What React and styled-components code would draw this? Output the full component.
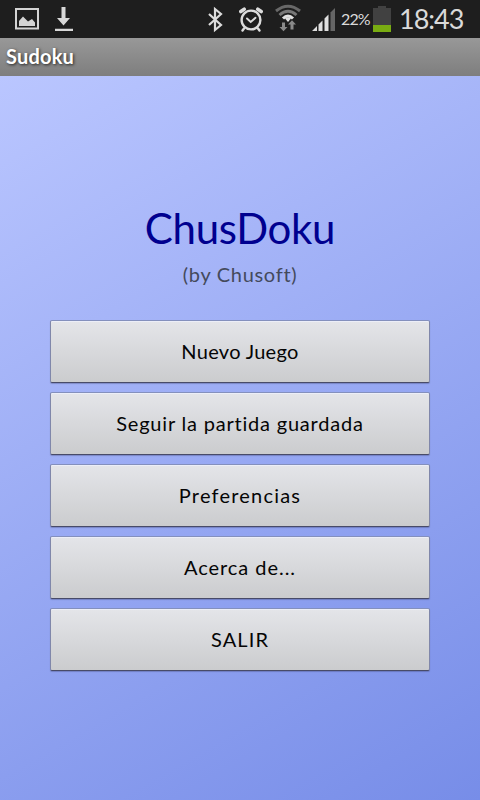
import React from "react";
import styled, { createGlobalStyle } from "styled-components";

const GlobalStyle = createGlobalStyle`
	* {
		box-sizing: border-box;
	}
	body {
		margin: 0;
		font-family: Lato, "Open Sans", sans-serif;
	}
`;

const Screen = styled.div`
	display: flex;
	flex-direction: column;
	width: 480px;
	height: 800px;
	overflow: hidden;
`;

const StatusBar = styled.header`
	display: flex;
	align-items: flex-start;
	justify-content: space-between;
	height: 38px;
	padding: 0 16px 0 15px;
	background: #1e1e1e;
	color: #dadada;
`;

const IconGroup = styled.div`
	display: flex;
	align-items: flex-start;
	gap: ${(props) => props.$gap}px;
`;

const Icon = styled.svg`
	display: block;
	flex: none;
	height: 38px;
`;

const BatteryLevel = styled.span`
	width: 29px;
	margin: 0 3px 0 6px;
	font-size: 16px;
	line-height: 38px;
	letter-spacing: -0.9px;
	white-space: nowrap;
`;

const Clock = styled.span`
	width: 65px;
	margin-left: 8px;
	font-size: 27px;
	line-height: 38px;
	letter-spacing: -1px;
	white-space: nowrap;
`;

const TitleBar = styled.div`
	height: 38px;
	padding-left: 6px;
	background: linear-gradient(#989898, #7e7e7e);
	color: #fff;
	font-size: 20px;
	font-weight: 700;
	line-height: 37px;
	letter-spacing: 0.2px;
	text-shadow: 1px 1px 3px rgba(0, 0, 0, 0.75);
`;

const Content = styled.main`
	display: flex;
	flex: 1;
	flex-direction: column;
	align-items: center;
	padding-top: 126px;
	background: linear-gradient(150deg, #bac6ff 0%, #778de8 100%);
`;

const Title = styled.h1`
	margin: 0;
	color: #00008f;
	font-size: 42px;
	font-weight: 400;
	line-height: 53px;
	letter-spacing: -0.3px;
`;

const Subtitle = styled.p`
	margin: 5px 0 32px;
	color: #444a5c;
	font-size: 20px;
	line-height: 28px;
	letter-spacing: 0.7px;
`;

const Menu = styled.nav`
	display: flex;
	flex-direction: column;
	gap: 9px;
	width: 380px;
`;

const MenuButton = styled.button`
	height: 63px;
	padding: 0 0 1px;
	border: 1px solid #8087aa;
	border-top-color: #8490bd;
	border-bottom: 1px solid #484b68;
	border-radius: 2px;
	background: linear-gradient(#e4e5e9, #cbccce);
	box-shadow: inset 0 1px #eceef8, 0 1px 1px rgba(45, 50, 90, 0.3);
	color: #050505;
	font-family: inherit;
	font-size: 20px;
	letter-spacing: ${(props) => props.$tracking}px;
`;

const menuItems = [
	{ label: "Nuevo Juego", tracking: 0.3 },
	{ label: "Seguir la partida guardada", tracking: 0.8 },
	{ label: "Preferencias", tracking: 1.2 },
	{ label: "Acerca de...", tracking: 0.95 },
	{ label: "SALIR", tracking: 1.1 },
];

function PictureIcon() {
	return (
		<Icon width="24" viewBox="0 0 24 38">
			<rect x="1" y="9" width="22" height="19.5" fill="none" stroke="#d4d4d4" strokeWidth="2" />
			<path d="M4 26V21L8 16.5l5 5 4-2.5 3 3.5V26z" fill="#d4d4d4" />
		</Icon>
	);
}

function DownloadIcon() {
	return (
		<Icon width="18" viewBox="0 0 18 38">
			<path d="M6.5 7h4v11H15l-6.5 7.5L2 18h4.5zM0 28.7h18V31H0z" fill="#d8d8d8" />
		</Icon>
	);
}

function BluetoothIcon() {
	return (
		<Icon width="15" viewBox="0 0 15 38">
			<path
				d="M1 14l12 11-6 5V9l6 5L1 25"
				fill="none"
				stroke="#dcdcdc"
				strokeWidth="2.2"
			/>
		</Icon>
	);
}

function AlarmIcon() {
	return (
		<Icon width="24" viewBox="0 0 24 38">
			<g fill="none" stroke="#dcdcdc" strokeLinecap="round">
				<circle cx="12" cy="20" r="9.4" strokeWidth="2.4" />
				<path d="M8 18.5l3.7 3.5 4.8-4.2" strokeWidth="2" />
				<path d="M1.8 11.5l3.4-2.3M22.2 11.5l-3.4-2.3" strokeWidth="3.6" />
				<path d="M5 28.5l-1.5 2M19 28.5l1.5 2" strokeWidth="2.4" />
			</g>
		</Icon>
	);
}

function WifiIcon() {
	return (
		<Icon width="26" viewBox="0 0 26 38">
			<g fill="none" strokeWidth="3">
				<path d="M1 11Q13 1.5 25 11" stroke="#686868" />
				<path d="M4.5 15Q13 7.5 21.5 15" stroke="#777" />
				<path d="M8 18.5Q13 13.5 18 18.5" stroke="#e0e0e0" />
			</g>
			<path d="M10 18.5Q13 16 16 18.5L13 22z" fill="#e0e0e0" />
			<path d="M7 22.5h3v4.5h2.5l-4 4.2L4.5 27H7zM15.5 29.5v-5H13l4-4.2 4 4.2h-2.5v5z" fill="#8a8a8a" />
		</Icon>
	);
}

function SignalIcon() {
	return (
		<Icon width="23" viewBox="0 0 23 38">
			<path d="M0 31l5-5v5zM6.5 24.5l4-4V31h-4zM12.5 18.5l4-4V31h-4z" fill="#dedede" />
			<path d="M18.5 12.5L23 8v23h-4.5z" fill="#666" />
		</Icon>
	);
}

function BatteryIcon() {
	return (
		<Icon width="18" viewBox="0 0 18 38">
			<path d="M0 8h5V6h8v2h5v17H0z" fill="#414141" />
			<path d="M0 25h18v7H0z" fill="#79ac12" />
		</Icon>
	);
}

function App() {
	return (
		<Screen>
			<GlobalStyle />
			<StatusBar>
				<IconGroup $gap={16}>
					<PictureIcon />
					<DownloadIcon />
				</IconGroup>
				<IconGroup $gap={0}>
					<IconGroup $gap={12}>
						<IconGroup $gap={16}>
							<BluetoothIcon />
							<AlarmIcon />
						</IconGroup>
						<IconGroup $gap={11}>
							<WifiIcon />
							<SignalIcon />
						</IconGroup>
					</IconGroup>
					<BatteryLevel>22%</BatteryLevel>
					<BatteryIcon />
					<Clock>18:43</Clock>
				</IconGroup>
			</StatusBar>
			<TitleBar>Sudoku</TitleBar>
			<Content>
				<Title>ChusDoku</Title>
				<Subtitle>(by Chusoft)</Subtitle>
				<Menu>
					{menuItems.map((item) => (
						<MenuButton key={item.label} $tracking={item.tracking}>
							{item.label}
						</MenuButton>
					))}
				</Menu>
			</Content>
		</Screen>
	);
}

export default App;
